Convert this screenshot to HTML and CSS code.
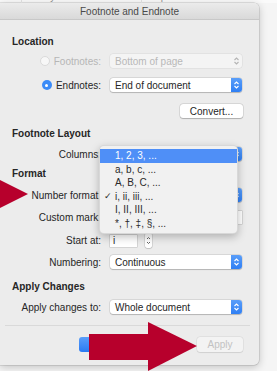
FILE: index.html
```html
<!DOCTYPE html>
<html lang="en">
<head>
    <meta charset="UTF-8">
    <meta name="viewport" content="width=device-width, initial-scale=1.0">
    <title>Footnote and Endnote</title>
    <link rel="stylesheet" href="styles.css">
</head>
<body>
    <div class="table-strip">
        <div class="cell cell-entry"><span>Entry</span></div>
        <div class="cell cell-caption"><span>Caption</span></div>
    </div>

    <div class="dialog">
        <div class="titlebar">Footnote and Endnote</div>

        <div class="content">
            <h2 class="section first">Location</h2>

            <div class="row gap-6">
                <label class="label disabled"><span class="radio"></span>Footnotes:</label>
                <div class="popup disabled">
                    <span>Bottom of page</span>
                    <svg class="chev" width="11" height="14" viewBox="0 0 11 14"><path d="M3.5 6 L5.5 4 L7.5 6 M3.5 8 L5.5 10 L7.5 8" fill="none" stroke="#b4b4b4" stroke-width="1.1"/></svg>
                </div>
            </div>

            <div class="row gap-10">
                <label class="label"><span class="radio checked"></span>Endnotes:</label>
                <div class="popup">
                    <span>End of document</span>
                    <svg class="chev blue" width="11" height="14" viewBox="0 0 11 14"><path d="M3.5 6 L5.5 4 L7.5 6 M3.5 8 L5.5 10 L7.5 8" fill="none" stroke="#fff" stroke-width="1.1"/></svg>
                </div>
            </div>

            <div class="row gap-12">
                <span></span>
                <button class="btn convert">Convert...</button>
            </div>

            <h2 class="section gap-10">Footnote Layout</h2>

            <div class="row gap-7">
                <label class="label">Columns:</label>
                <div class="popup">
                    <span></span>
                    <svg class="chev blue" width="11" height="14" viewBox="0 0 11 14"><path d="M3.5 6 L5.5 4 L7.5 6 M3.5 8 L5.5 10 L7.5 8" fill="none" stroke="#fff" stroke-width="1.1"/></svg>
                </div>
            </div>

            <h2 class="section gap-7">Format</h2>

            <div class="row gap-8">
                <label class="label">Number format:</label>
                <div class="popup">
                    <span></span>
                    <svg class="chev blue" width="11" height="14" viewBox="0 0 11 14"><path d="M3.5 6 L5.5 4 L7.5 6 M3.5 8 L5.5 10 L7.5 8" fill="none" stroke="#fff" stroke-width="1.1"/></svg>
                </div>
            </div>

            <div class="row gap-8">
                <label class="label">Custom mark:</label>
                <div class="field wide"></div>
            </div>

            <div class="row gap-9">
                <label class="label">Start at:</label>
                <div class="start-at">
                    <div class="field short">i</div>
                    <div class="stepper">
                        <svg width="7" height="15" viewBox="0 0 7 15"><path d="M2 6 L3.5 4.5 L5 6 M2 9 L3.5 10.5 L5 9" fill="none" stroke="#555" stroke-width="0.9"/></svg>
                    </div>
                </div>
            </div>

            <div class="row gap-8">
                <label class="label">Numbering:</label>
                <div class="popup">
                    <span>Continuous</span>
                    <svg class="chev blue" width="11" height="14" viewBox="0 0 11 14"><path d="M3.5 6 L5.5 4 L7.5 6 M3.5 8 L5.5 10 L7.5 8" fill="none" stroke="#fff" stroke-width="1.1"/></svg>
                </div>
            </div>

            <h2 class="section gap-12">Apply Changes</h2>

            <div class="row gap-7">
                <label class="label">Apply changes to:</label>
                <div class="popup">
                    <span>Whole document</span>
                    <svg class="chev blue" width="11" height="14" viewBox="0 0 11 14"><path d="M3.5 6 L5.5 4 L7.5 6 M3.5 8 L5.5 10 L7.5 8" fill="none" stroke="#fff" stroke-width="1.1"/></svg>
                </div>
            </div>
        </div>

        <div class="separator"></div>

        <div class="buttons">
            <button class="btn primary">OK</button>
            <button class="btn apply" disabled>Apply</button>
        </div>
    </div>

    <!-- open popup menu for Number format -->
    <ul class="menu">
        <li class="selected">1, 2, 3, ...</li>
        <li>a, b, c, ...</li>
        <li>A, B, C, ...</li>
        <li class="checked">i, ii, iii, ...</li>
        <li>I, II, III, ...</li>
        <li>*, †, ‡, §, ...</li>
    </ul>

    <svg class="arrows" width="277" height="371" viewBox="0 0 277 371">
        <polygon points="0,180 28,194 0,208" fill="#b7002c"/>
        <rect x="89" y="334" width="60" height="26" fill="#b7002c"/>
        <polygon points="148,322 197,346 148,371" fill="#b7002c"/>
    </svg>
</body>
</html>
```

FILE: styles.css
```css
body {
    margin: 0;
    width: 277px;
    height: 371px;
    overflow: hidden;
    position: relative;
    background-color: #f5f5f5;
    font-family: "Liberation Sans", Arial, sans-serif;
    font-size: 10px;
    color: #262626;
}
.table-strip {
    height: 3px;
    overflow: hidden;
    display: flex;
    padding-left: 21px;
    background-color: #fafafa;
}
.cell {
    border-left: 1px solid #dadada;
    color: #8c8c8c;
    line-height: 10px;
}
.cell span {
    display: block;
    margin-top: -8px;
}
.cell-entry {
    width: 109px;
    padding-left: 10px;
}
.cell-caption {
    padding-left: 6px;
}
.dialog {
    width: 259px;
    background-color: #ececec;
    border-radius: 0 5px 5px 0;
    box-shadow: 0 0 0 0.5px rgba(0, 0, 0, 0.18), 0 2px 8px rgba(0, 0, 0, 0.22);
    padding-bottom: 13px;
}
.titlebar {
    height: 16px;
    line-height: 17px;
    text-align: center;
    color: #4a4a4a;
    background: linear-gradient(#ebebeb, #d9d9d9);
    border-bottom: 1px solid #c8c8c8;
    border-radius: 0 5px 0 0;
}
.content {
    padding-left: 12px;
}
.section {
    margin: 0;
    font-size: 10px;
    font-weight: bold;
    line-height: 12px;
}
.section.first {
    margin-top: 16px;
}
.gap-6 { margin-top: 6px; }
.gap-7 { margin-top: 7px; }
.gap-8 { margin-top: 8px; }
.gap-9 { margin-top: 9px; }
.gap-10 { margin-top: 10px; }
.gap-12 { margin-top: 12px; }
.row {
    display: grid;
    grid-template-columns: 89px 132px;
    column-gap: 9px;
    align-items: center;
    height: 14px;
}
.label {
    display: flex;
    justify-content: flex-end;
    align-items: center;
    gap: 4px;
    white-space: nowrap;
}
.label.disabled {
    color: #b6b6b6;
}
.radio {
    width: 10px;
    height: 10px;
    border-radius: 50%;
    box-sizing: border-box;
    border: 1px solid #dadada;
    background-color: #f7f7f7;
}
.radio.checked {
    border: none;
    background-color: #3b8bf7;
    position: relative;
}
.radio.checked::after {
    content: "";
    position: absolute;
    left: 3.5px;
    top: 3.5px;
    width: 3px;
    height: 3px;
    border-radius: 50%;
    background-color: #fff;
}
.popup {
    display: flex;
    justify-content: space-between;
    align-items: center;
    height: 14px;
    padding-left: 5px;
    background-color: #fff;
    border-radius: 3px;
    box-shadow: 0 0 0 0.5px rgba(0, 0, 0, 0.14), 0 0.5px 1px rgba(0, 0, 0, 0.18);
    white-space: nowrap;
}
.popup.disabled {
    background-color: #f4f4f4;
    color: #b8b8b8;
    box-shadow: 0 0 0 0.5px rgba(0, 0, 0, 0.08);
}
.chev {
    display: block;
    flex-shrink: 0;
}
.chev.blue {
    background: linear-gradient(#5a9ef9, #2f7ff4);
    border-radius: 0 3px 3px 0;
}
.btn {
    font-family: inherit;
    font-size: 10px;
    height: 14px;
    padding: 0;
    border: none;
    border-radius: 3px;
    background-color: #fff;
    color: #262626;
    box-shadow: 0 0 0 0.5px rgba(0, 0, 0, 0.14), 0 0.5px 1px rgba(0, 0, 0, 0.2);
}
.convert {
    width: 63px;
    justify-self: end;
    margin-right: -1px;
}
.field {
    background-color: #fff;
    box-shadow: 0 0 0 0.5px rgba(0, 0, 0, 0.2);
    box-sizing: border-box;
}
.field.wide {
    height: 13px;
}
.field.short {
    width: 27px;
    height: 12px;
    line-height: 12px;
    padding-left: 3px;
}
.start-at {
    display: flex;
    align-items: center;
    gap: 8px;
}
.stepper {
    width: 7px;
    height: 15px;
    background-color: #fff;
    border-radius: 2px;
    box-shadow: 0 0 0 0.5px rgba(0, 0, 0, 0.16), 0 0.5px 1px rgba(0, 0, 0, 0.18);
}
.stepper svg {
    display: block;
}
.separator {
    height: 1px;
    margin: 11px 9px 0 5px;
    background-color: #d9d9d9;
}
.buttons {
    display: flex;
    margin-top: 11px;
    padding-left: 79px;
    gap: 56px;
}
.btn.primary {
    width: 62px;
    height: 15px;
    color: #fff;
    background: linear-gradient(#5a9ef9, #2a7af3);
    box-shadow: none;
}
.btn.apply {
    width: 46px;
    height: 15px;
    color: #c2c2c2;
    background-color: #f3f3f3;
    box-shadow: 0 0 0 0.5px rgba(0, 0, 0, 0.08), 0 0.5px 1px rgba(0, 0, 0, 0.08);
}
.menu {
    position: absolute;
    left: 99px;
    top: 145px;
    width: 137px;
    margin: 0;
    padding: 3px 0 2px;
    list-style: none;
    background-color: #f1f1f1;
    border: 1px solid rgba(0, 0, 0, 0.1);
    border-radius: 5px;
    box-shadow: 0 3px 9px rgba(0, 0, 0, 0.25);
}
.menu li {
    height: 13.6px;
    line-height: 13.6px;
    padding-left: 15px;
    color: #2a2a2a;
    position: relative;
}
.menu li.selected {
    background-color: #4f8ff7;
    color: #fff;
}
.menu li.checked::before {
    content: "✓";
    position: absolute;
    left: 4px;
    font-family: "DejaVu Sans", sans-serif;
    font-size: 9px;
}
.arrows {
    position: absolute;
    left: 0;
    top: 0;
}
```
